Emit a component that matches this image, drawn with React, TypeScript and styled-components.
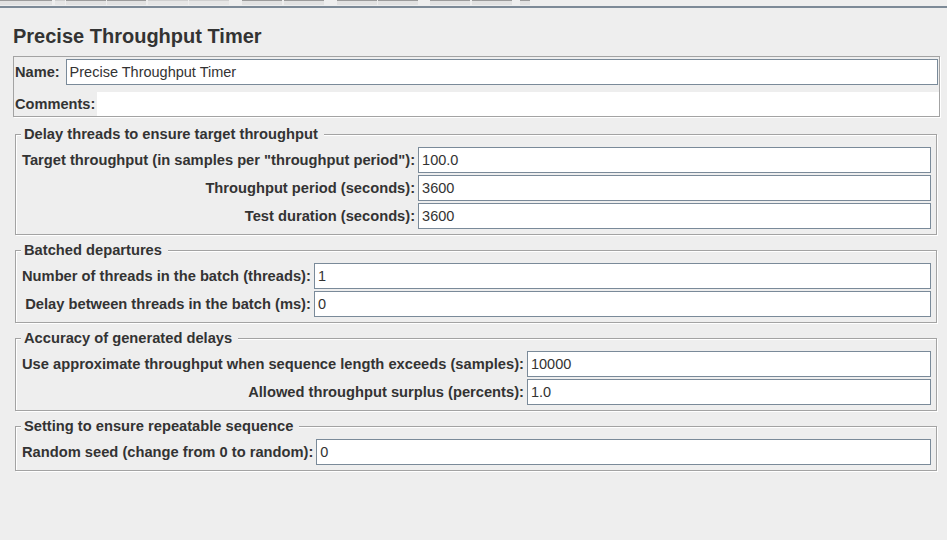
import { FC } from "react";
import styled, { createGlobalStyle } from "styled-components";

type Field = { label: string; value: string };
type Section = { title: string; fields: Field[] };

const sections: Section[] = [
  {
    title: "Delay threads to ensure target throughput",
    fields: [
      { label: 'Target throughput (in samples per "throughput period"):', value: "100.0" },
      { label: "Throughput period (seconds):", value: "3600" },
      { label: "Test duration (seconds):", value: "3600" },
    ],
  },
  {
    title: "Batched departures",
    fields: [
      { label: "Number of threads in the batch (threads):", value: "1" },
      { label: "Delay between threads in the batch (ms):", value: "0" },
    ],
  },
  {
    title: "Accuracy of generated delays",
    fields: [
      { label: "Use approximate throughput when sequence length exceeds (samples):", value: "10000" },
      { label: "Allowed throughput surplus (percents):", value: "1.0" },
    ],
  },
  {
    title: "Setting to ensure repeatable sequence",
    fields: [{ label: "Random seed (change from 0 to random):", value: "0" }],
  },
];

// leftover toolbar buttons peeking out at the very top
const tabs: { gap: number; width: number; light?: boolean }[] = [
  { gap: 0, width: 52 },
  { gap: 3, width: 10, light: true },
  { gap: 1, width: 40 },
  { gap: 1, width: 39 },
  { gap: 2, width: 40, light: true },
  { gap: 1, width: 40, light: true },
  { gap: 13, width: 40 },
  { gap: 2, width: 40 },
  { gap: 13, width: 40 },
  { gap: 1, width: 40 },
  { gap: 12, width: 40 },
  { gap: 2, width: 40 },
  { gap: 8, width: 10 },
];

const App: FC = () => {
  return (
    <>
      <GlobalStyle />
      <Page>
        <TabStrip>
          {tabs.map((t, i) => (
            <TabStub key={i} $gap={t.gap} $width={t.width} $light={t.light} />
          ))}
        </TabStrip>
        <Divider />
        <Title>Precise Throughput Timer</Title>
        <NamePanel>
          <NameRow>
            <NameLabel>Name:</NameLabel>
            <TextInput defaultValue="Precise Throughput Timer" $flush />
          </NameRow>
          <CommentsRow>
            <CommentsLabel>Comments:</CommentsLabel>
            <CommentsBox defaultValue="" />
          </CommentsRow>
        </NamePanel>
        <Sections>
          {sections.map((s) => (
            <Group key={s.title}>
              <Legend>{s.title}</Legend>
              <Rows>
                {s.fields.map((f) => (
                  <Row key={f.label}>
                    <Label>{f.label}</Label>
                    <TextInput defaultValue={f.value} />
                  </Row>
                ))}
              </Rows>
            </Group>
          ))}
        </Sections>
      </Page>
    </>
  );
};

export default App;

const GlobalStyle = createGlobalStyle`
  html, body {
    margin: 0;
    padding: 0;
    background: #eeeeee;
  }
  body {
    font-family: "Liberation Sans", Arial, sans-serif;
    color: #333333;
  }
  * {
    box-sizing: border-box;
  }
`;

const Page = styled.div`
  width: 947px;
  height: 540px;
  overflow: hidden;
  background: #eeeeee;
`;

const TabStrip = styled.div`
  display: flex;
  height: 6px;
`;

const TabStub = styled.div<{ $gap: number; $width: number; $light?: boolean }>`
  width: ${(p) => p.$width}px;
  margin-left: ${(p) => p.$gap}px;
  height: 5px;
  border-top: 1px solid ${(p) => (p.$light ? "#cfcfcf" : "#9c9c9c")};
  background: ${(p) => (p.$light ? "#e6e6e6" : "#e2e2e2")};
`;

const Divider = styled.div`
  height: 2px;
  background: #7d8a97;
`;

const Title = styled.h1`
  margin: 16px 0 0 13px;
  font-size: 20px;
  line-height: 24px;
  font-weight: bold;
  color: #333333;
`;

const NamePanel = styled.div`
  display: flex;
  flex-direction: column;
  gap: 7px;
  margin: 8px 7px 0 13px;
  padding: 2px 0 0 1px;
  border: 1px solid #a3a3a3;
  box-shadow: 1px 1px 0 #ffffff;
`;

const NameRow = styled.div`
  display: flex;
  align-items: center;
  height: 26px;
`;

const NameLabel = styled.label`
  font-size: 14.6px;
  font-weight: bold;
  margin: 0 6px 0 0;
  white-space: nowrap;
`;

const CommentsRow = styled.div`
  display: flex;
  align-items: center;
  height: 24px;
`;

const CommentsLabel = styled.label`
  font-size: 14.6px;
  font-weight: bold;
  margin: 0 2px 0 0;
  white-space: nowrap;
`;

const CommentsBox = styled.textarea`
  flex: 1;
  align-self: stretch;
  border: none;
  outline: none;
  resize: none;
  background: #ffffff;
  font: 14px "Liberation Sans", Arial, sans-serif;
`;

const TextInput = styled.input<{ $flush?: boolean }>`
  flex: ${(p) => (p.$flush ? "1" : "initial")};
  width: 100%;
  min-width: 0;
  height: 26px;
  margin-right: ${(p) => (p.$flush ? "1px" : "0")};
  padding: 0 3px;
  border: 1px solid #7a8a99;
  border-radius: 0;
  outline: none;
  background: #ffffff;
  color: #333333;
  font: 14.5px "Liberation Sans", Arial, sans-serif;
`;

const Sections = styled.div`
  display: flex;
  flex-direction: column;
  gap: 15px;
  margin: 17px 10px 0 15px;
`;

const Group = styled.div`
  padding: 0 5px 5px 6px;
  border: 1px solid #a3a3a3;
  box-shadow: inset 1px 1px 0 #ffffff, 1px 1px 0 #ffffff;
`;

const Legend = styled.div`
  display: table;
  margin: -9px 0 0 -1px;
  padding: 0 6px 0 3px;
  background: #eeeeee;
  font-size: 14.7px;
  line-height: 16px;
  font-weight: bold;
  color: #333333;
`;

const Rows = styled.div`
  display: grid;
  grid-template-columns: max-content 1fr;
  column-gap: 3px;
  row-gap: 2px;
  margin-top: 5px;
`;

const Row = styled.div`
  display: contents;
`;

const Label = styled.label`
  justify-self: end;
  align-self: center;
  font-size: 14.7px;
  font-weight: bold;
  white-space: nowrap;
`;
